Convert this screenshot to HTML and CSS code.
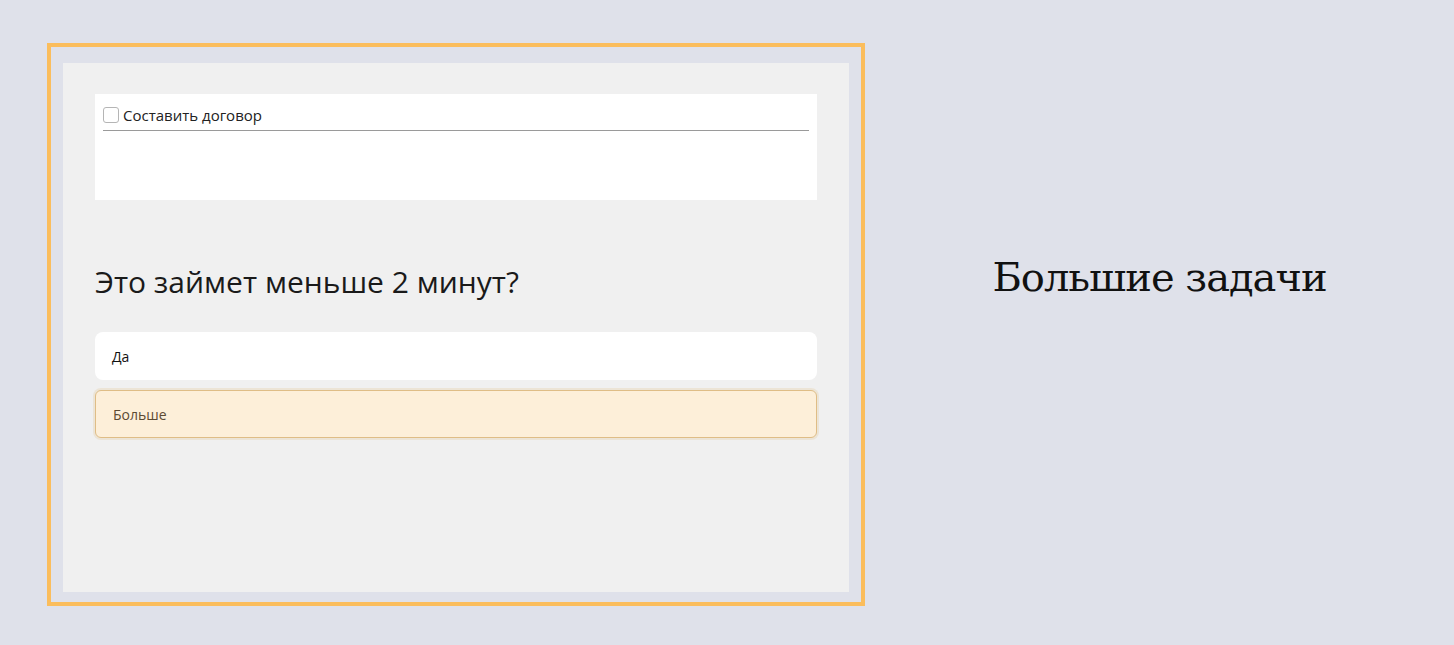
FILE: index.html
```html
<!DOCTYPE html>
<html lang="ru">
<head>
    <meta charset="UTF-8">
    <meta name="viewport" content="width=device-width, initial-scale=1.0">
    <title>Задачи</title>
    <link rel="stylesheet" href="styles.css">
</head>
<body>
    <div class="page">
        <div class="frame">
            <div class="panel">
                <div class="task-card">
                    <label class="task">
                        <input type="checkbox" class="task-check">
                        <span>Составить договор</span>
                    </label>
                </div>

                <h2 class="question">Это займет меньше 2 минут?</h2>

                <div class="answers">
                    <div class="answer">Да</div>
                    <div class="answer selected">Больше</div>
                </div>
            </div>
        </div>

        <div class="side">
            <h1 class="side-title">Большие задачи</h1>
        </div>
    </div>
</body>
</html>
```

FILE: styles.css
```css
body {
    margin: 0;
    background-color: #dfe1ea;
    font-family: "Open Sans", "Noto Sans", sans-serif;
}
.page {
    display: flex;
    align-items: flex-start;
    padding: 43px 0 0 47px;
    height: 602px;
}
.frame {
    border: 4px solid #fbbd5c;
    padding: 16px 12px 10px 12px;
}
.panel {
    height: 529px;
    width: 786px;
    background-color: #f0f0f0;
    padding: 31px 32px 0 32px;
    box-sizing: border-box;
}
.task-card {
    background-color: white;
    height: 106px;
    padding: 11px 8px 0 8px;
    box-sizing: border-box;
}
.task {
    display: flex;
    align-items: center;
    gap: 4px;
    font-size: 15px;
    color: #222;
    padding-bottom: 5px;
    border-bottom: 1px solid #9a9a9a;
}
.task-check {
    margin: 0;
    width: 16px;
    height: 16px;
    appearance: none;
    border: 1px solid #b5b5b5;
    border-radius: 3px;
    background: white;
}
.question {
    margin: 63px 0 0 0;
    font-size: 30px;
    font-weight: normal;
    color: #1a1a1a;
    line-height: 38px;
}
.answers {
    margin-top: 31px;
    display: flex;
    flex-direction: column;
    gap: 10px;
}
.answer {
    height: 48px;
    display: flex;
    align-items: center;
    padding: 0 17px;
    background-color: white;
    border-radius: 8px;
    font-size: 14px;
    color: #111;
    box-sizing: border-box;
}
.answer.selected {
    background-color: #fdefd9;
    border: 1px solid #dfbd86;
    border-radius: 6px;
    color: #5c4a33;
    box-shadow: 0 0 0 2px #ece4d6;
}
.side {
    flex: 1;
    display: flex;
    justify-content: center;
}
.side-title {
    margin: 211px 0 0 0;
    font-family: "DejaVu Serif", serif;
    font-weight: normal;
    font-size: 40px;
    letter-spacing: -1px;
    color: #111;
}
```
